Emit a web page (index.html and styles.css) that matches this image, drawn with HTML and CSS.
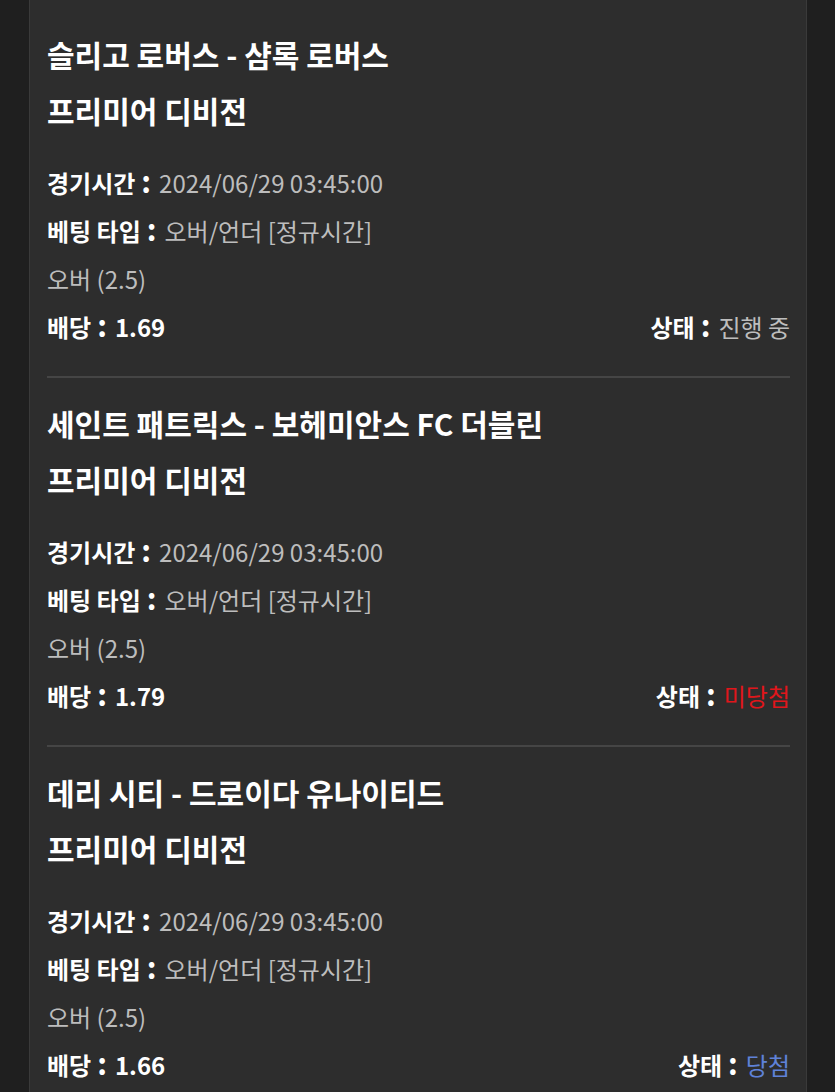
FILE: index.html
```html
<!DOCTYPE html>
<html>
<head>
    <meta charset="utf-8">
    <title>베팅 내역</title>
    <link rel="stylesheet" href="styles.css">
</head>
<body>
<div class="bet-list">
    <div class="bet-item">
        <div class="match-title">슬리고 로버스 - 샴록 로버스</div>
        <div class="league">프리미어 디비전</div>
        <div class="details">
            <div class="row"><b>경기시간<span class="colon">:</span></b><span class="value">2024/06/29 03:45:00</span></div>
            <div class="row"><b>베팅 타입<span class="colon">:</span></b><span class="value">오버/언더 [정규시간]</span></div>
            <div class="row"><span class="value">오버 (2.5)</span></div>
            <div class="row split">
                <div><b>배당<span class="colon">:</span>1.69</b></div>
                <div><b>상태<span class="colon">:</span></b><span class="value">진행 중</span></div>
            </div>
        </div>
    </div>
    <div class="bet-item">
        <div class="match-title">세인트 패트릭스 - 보헤미안스 FC 더블린</div>
        <div class="league">프리미어 디비전</div>
        <div class="details">
            <div class="row"><b>경기시간<span class="colon">:</span></b><span class="value">2024/06/29 03:45:00</span></div>
            <div class="row"><b>베팅 타입<span class="colon">:</span></b><span class="value">오버/언더 [정규시간]</span></div>
            <div class="row"><span class="value">오버 (2.5)</span></div>
            <div class="row split">
                <div><b>배당<span class="colon">:</span>1.79</b></div>
                <div><b>상태<span class="colon">:</span></b><span class="value lose">미당첨</span></div>
            </div>
        </div>
    </div>
    <div class="bet-item">
        <div class="match-title">데리 시티 - 드로이다 유나이티드</div>
        <div class="league">프리미어 디비전</div>
        <div class="details">
            <div class="row"><b>경기시간<span class="colon">:</span></b><span class="value">2024/06/29 03:45:00</span></div>
            <div class="row"><b>베팅 타입<span class="colon">:</span></b><span class="value">오버/언더 [정규시간]</span></div>
            <div class="row"><span class="value">오버 (2.5)</span></div>
            <div class="row split">
                <div><b>배당<span class="colon">:</span>1.66</b></div>
                <div><b>상태<span class="colon">:</span></b><span class="value win">당첨</span></div>
            </div>
        </div>
    </div>
</div>
</body>
</html>
```

FILE: styles.css
```css
body {
    margin: 0;
    background-color: #1f1f1f;
    font-family: "Noto Sans CJK KR", "Noto Sans", sans-serif;
    color: #ffffff;
}
.bet-list {
    margin: 0 28px 0 29px;
    padding: 9px 16px 0 17px;
    background-color: #2d2d2d;
    border-left: 1px solid #3a3a3a;
    border-right: 1px solid #3a3a3a;
}
/* one bet ticket */
.bet-item {
    padding: 17px 0 25px;
    border-bottom: 2px solid #454545;
}
.match-title, .league {
    font-size: 30px;
    font-weight: 700;
    line-height: 56px;
}
.details {
    margin-top: 21px;
    font-size: 24px;
}
.row {
    line-height: 48px;
}
.row b {
    font-weight: 700;
}
.row .colon {
    font-size: 30px;
    line-height: 0;
    margin: 0 8px 0 6px;
}
.row .value {
    color: #bdbdbd;
}
.row .value.lose {
    color: #e0161b;
}
.row .value.win {
    color: #5f82d8;
}
.split {
    display: flex;
    justify-content: space-between;
}
```
